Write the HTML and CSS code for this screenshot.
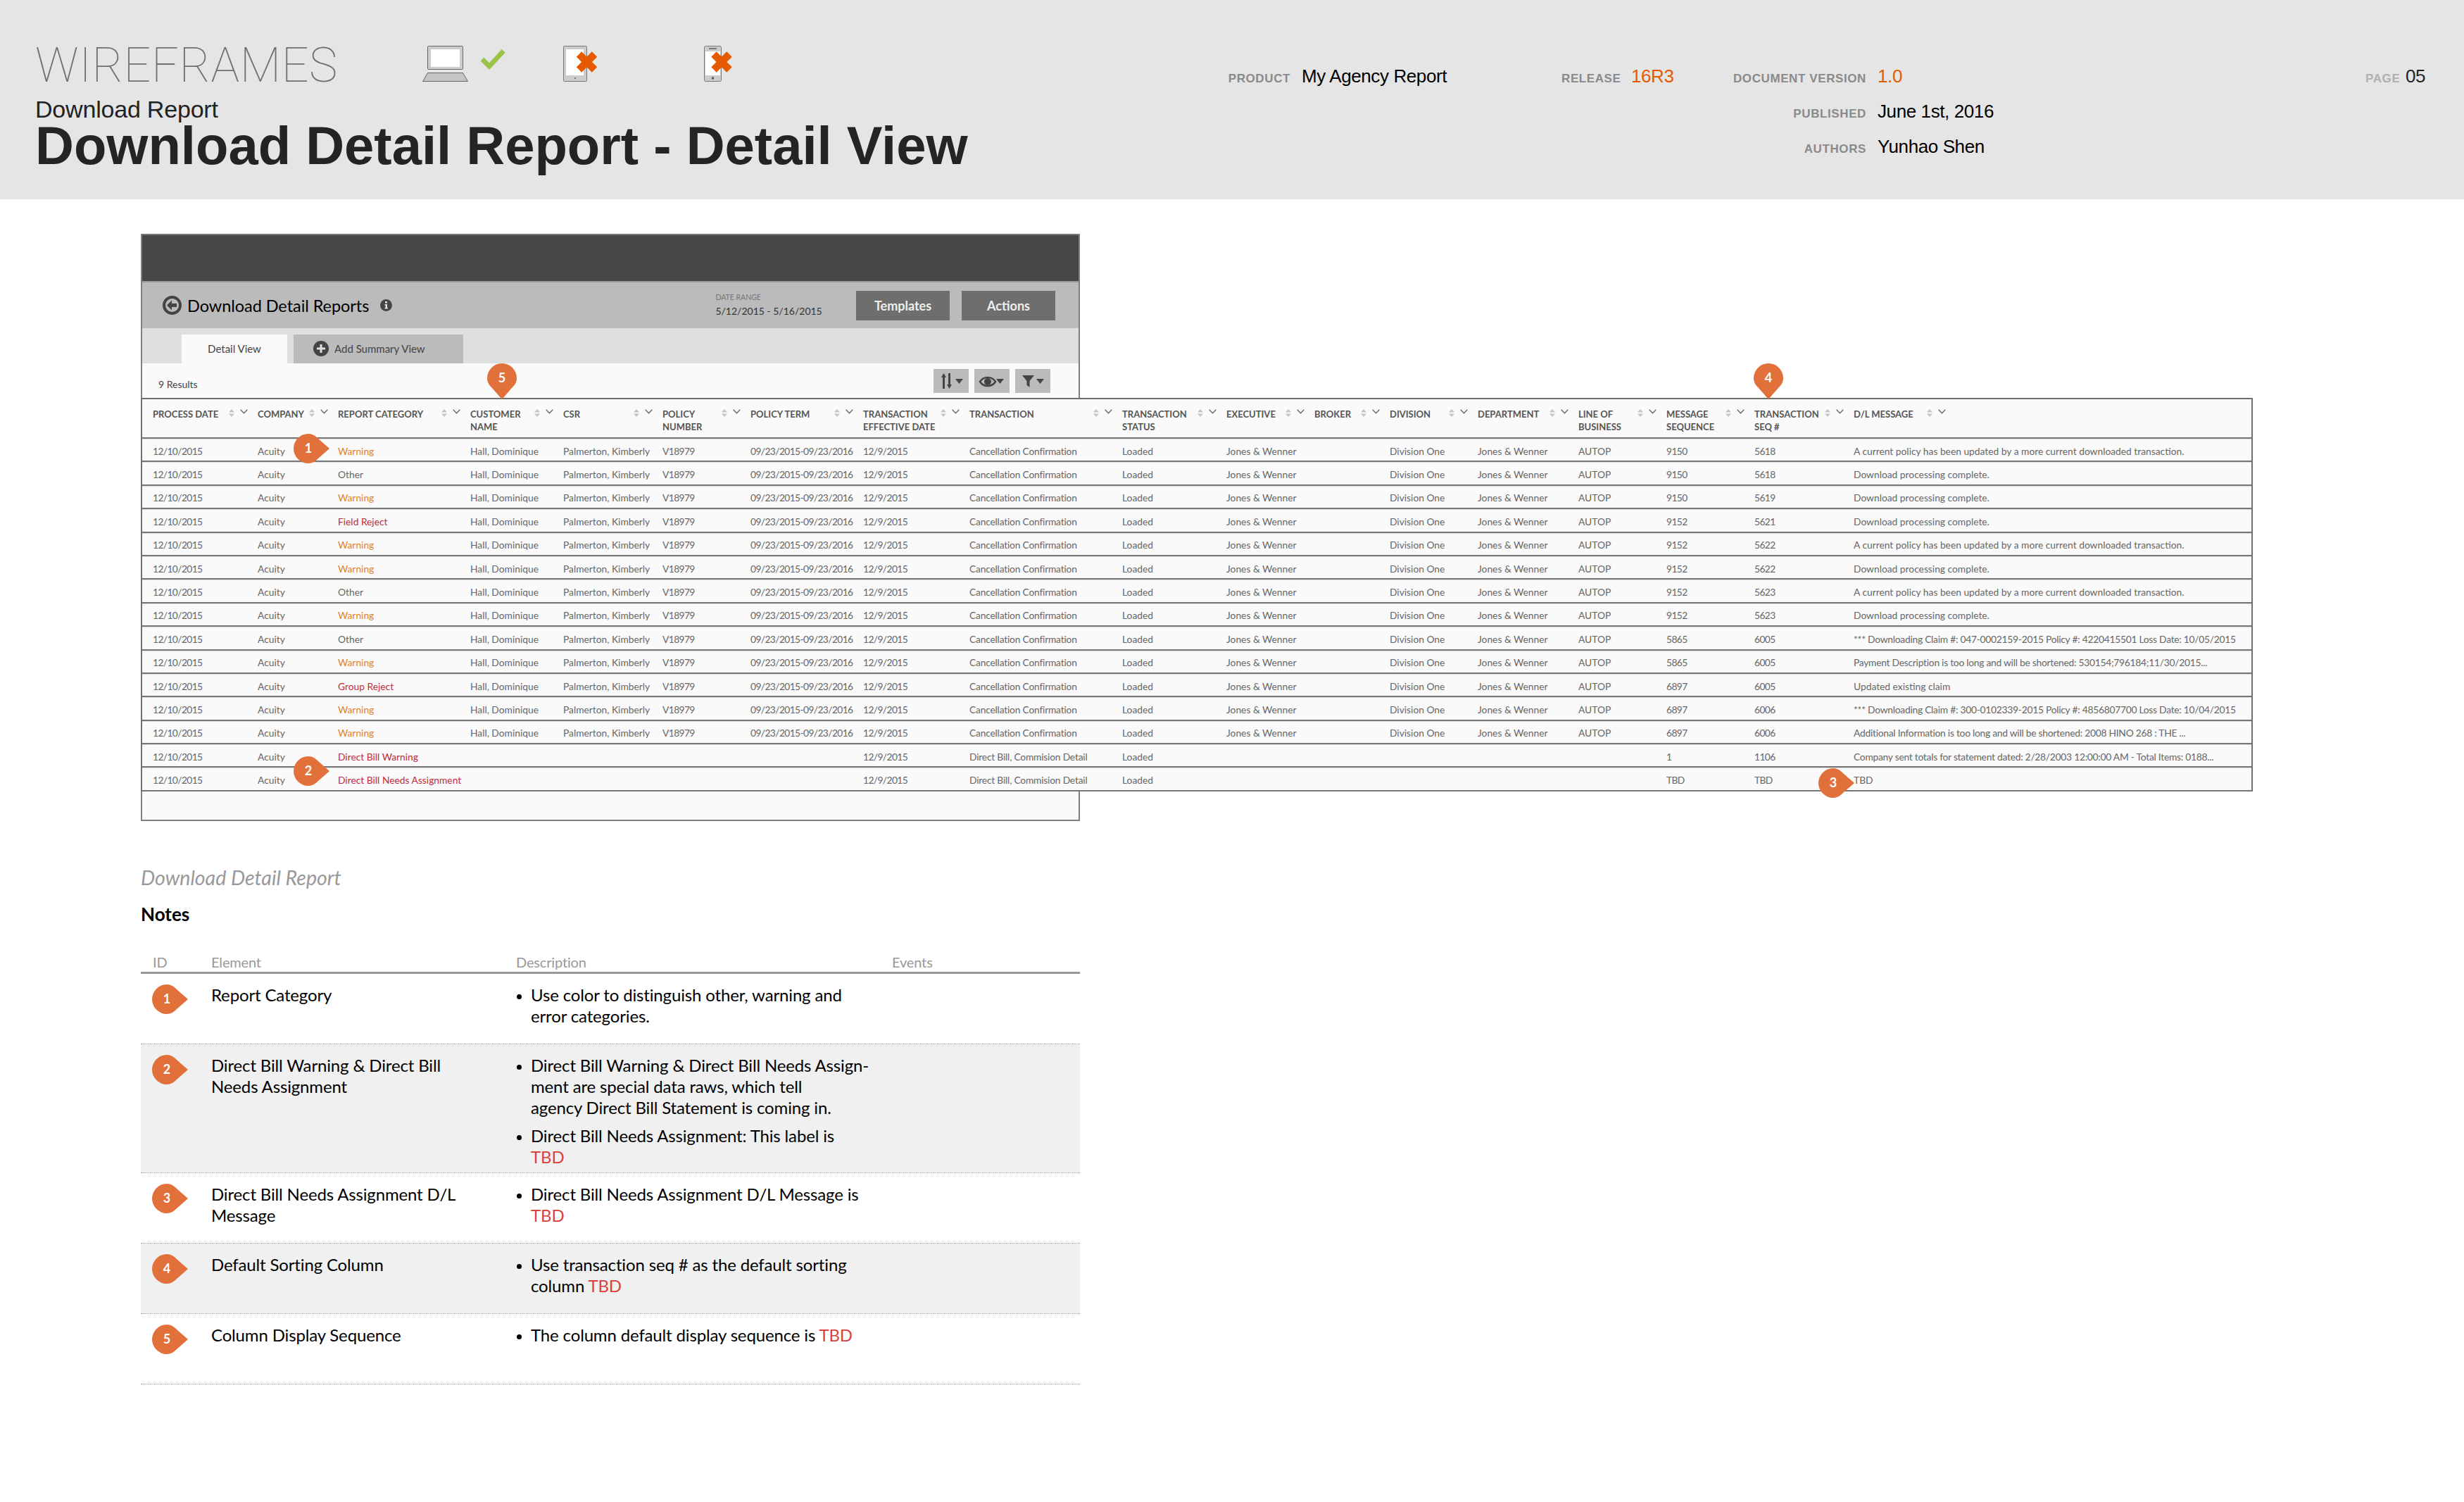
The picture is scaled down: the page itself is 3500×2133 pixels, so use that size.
FILE: index.html
```html
<!DOCTYPE html>
<html lang="en">
<head>
  <meta charset="UTF-8" />
  <title>Download Detail Report - Detail View</title>
  <link rel="stylesheet" href="styles.css">
</head>
<body>
  <header class="page-head">
    <div class="head-left">
      <div class="head-top">
        <div class="wordmark">WIREFRAMES</div>
        <svg class="device" viewBox="0 0 200 52">
          <rect x="7.5" y="0.5" width="50" height="33" rx="1" fill="#ccc" stroke="#666"/>
          <rect x="12" y="5" width="41" height="25" fill="#fff"/>
          <polygon points="0.5,50.5 64.5,50.5 57.5,38.5 7.5,38.5" fill="#c4c4c4" stroke="#666"/>
          <polygon points="82.7,21.7 87.3,16.7 95,24.3 112.7,5 117.7,9.7 95,34" fill="#9bc447"/>
        </svg>
        <svg class="device" viewBox="0 0 200 52">
          <rect x="0.5" y="0.5" width="33" height="50" rx="1" fill="#ccc" stroke="#777"/>
          <rect x="4" y="5" width="25" height="37" fill="#fff"/>
          <circle cx="17" cy="46" r="1" fill="#555"/>
          <path d="M22.5 12 44.5 34M44.5 12 22.5 34" stroke="#e55a00" stroke-width="10.5"/>
        </svg>
        <svg class="device" viewBox="0 0 200 52">
          <rect x="0.5" y="0.5" width="24" height="50" rx="2" fill="#ccc" stroke="#777"/>
          <rect x="2" y="8" width="21" height="34" fill="#fff"/>
          <rect x="7" y="3" width="11" height="2" fill="#777"/>
          <circle cx="12.5" cy="46" r="1.7" fill="#555"/>
          <path d="M14 12 36 34M36 12 14 34" stroke="#e55a00" stroke-width="10.5"/>
        </svg>
      </div>
      <div class="head-sub">Download Report</div>
      <h1 class="head-title">Download Detail Report - Detail View</h1>
    </div>
    <div class="head-meta">
      <span class="meta-label">PRODUCT</span><span class="meta-value">My Agency Report</span>
      <span class="meta-label">RELEASE</span><span class="meta-value hot">16R3</span>
      <span class="meta-label">DOCUMENT VERSION</span><span class="meta-value hot">1.0</span>
      <span class="meta-label page-label">PAGE</span><span class="meta-value page-no">05</span>

      <span class="meta-label meta-col5">PUBLISHED</span><span class="meta-value meta-wide">June 1st, 2016</span>
      <span class="meta-label meta-col5">AUTHORS</span><span class="meta-value meta-wide">Yunhao Shen</span>
    </div>
  </header>

  <main class="page-body">
    <div class="frame">
      <div class="dark-bar"></div>
      <div class="title-bar">
        <svg class="back-icon" viewBox="0 0 27 27">
          <circle cx="13.5" cy="13.5" r="11.5" fill="none" stroke="#444" stroke-width="4"/>
          <path d="M13 6.5 6 13.5l7 7v-4.500h7v-5h-7z" fill="#444"/>
        </svg>
        <span class="report-name">Download Detail Reports</span>
        <svg class="info-icon" viewBox="0 0 17 17">
          <circle cx="8.500" cy="8.500" r="8.500" fill="#444"/>
          <path d="M7 3h3v2.500H7zM6.500 7H10v5h1v1.500H6.500V12h1V8.500h-1z" fill="#ddd"/>
        </svg>
        <div class="date-range">
          <div class="date-label">DATE RANGE</div>
          <div class="date-value">5/12/2015 - 5/16/2015</div>
        </div>
        <button class="bar-btn">Templates</button>
        <button class="bar-btn">Actions</button>
      </div>
      <div class="tabs">
        <div class="tab tab-on">Detail View</div>
        <div class="tab tab-add">
          <svg class="plus-icon" viewBox="0 0 22 22">
            <circle cx="11" cy="11" r="11" fill="#444"/>
            <path d="M9.500 5h3v4.500H17v3h-4.500V17h-3v-4.500H5v-3h4.500z" fill="#ddd"/>
          </svg>
          Add Summary View
        </div>
      </div>
      <div class="results-bar">
        <span class="results-count">9 Results</span>
        <div class="tools">
          <svg class="tool" viewBox="0 0 50 34">
            <path d="M14.500 6 18 12h-2v16h-3V12h-2zM21 6h3v16h2l-3.500 6-3.500-6h2z" fill="#444"/>
            <path d="M31 14h11l-5.500 7z" fill="#444"/>
          </svg>
          <svg class="tool" viewBox="0 0 50 34">
            <path d="M8 18c5-8 17-8 22 0-5 8-17 8-22 0z" fill="none" stroke="#444" stroke-width="2.500"/>
            <circle cx="19" cy="18" r="5" fill="#444"/>
            <path d="M31 14h11l-5.500 7z" fill="#444"/>
          </svg>
          <svg class="tool" viewBox="0 0 50 34">
            <path d="M10 9h17l-6.500 8v9l-4-3v-6z" fill="#444"/>
            <path d="M30 14h11l-5.500 7z" fill="#444"/>
          </svg>
        </div>
      </div>
      <table class="grid">
        <colgroup id="gridCols"></colgroup>
        <thead><tr id="gridHead"></tr></thead>
        <tbody id="gridBody"></tbody>
      </table>

      <svg class="pin pin-at-1" viewBox="0 0 52 42"><use href="#pinRight"/><text x="21" y="27">1</text></svg>
      <svg class="pin pin-at-2" viewBox="0 0 52 42"><use href="#pinRight"/><text x="21" y="27">2</text></svg>
      <svg class="pin pin-at-3" viewBox="0 0 52 42"><use href="#pinRight"/><text x="21" y="27">3</text></svg>
      <svg class="pin-down pin-at-4" viewBox="0 0 42 52"><use href="#pinDown"/><text x="21" y="27">4</text></svg>
      <svg class="pin-down pin-at-5" viewBox="0 0 42 52"><use href="#pinDown"/><text x="21" y="27">5</text></svg>
    </div>

    <section class="notes">
      <div class="notes-source">Download Detail Report</div>
      <h2 class="notes-title">Notes</h2>
      <div class="note-row note-head">
        <div class="note-id-head">ID</div><div>Element</div><div>Description</div><div>Events</div>
      </div>

      <div class="note-row">
        <svg class="pin" viewBox="0 0 52 42"><use href="#pinRight"/><text x="21" y="27">1</text></svg>
        <div>Report Category</div>
        <ul><li>Use color to distinguish other, warning and<br>error categories.</li></ul>
      </div>
      <div class="note-row shaded">
        <svg class="pin" viewBox="0 0 52 42"><use href="#pinRight"/><text x="21" y="27">2</text></svg>
        <div>Direct Bill Warning &amp; Direct Bill<br>Needs Assignment</div>
        <ul>
          <li>Direct Bill Warning &amp; Direct Bill Needs Assign-<br>ment are special data raws, which tell<br>agency Direct Bill Statement is coming in.</li>
          <li>Direct Bill Needs Assignment: This label is<br><span class="tbd">TBD</span></li>
        </ul>
      </div>
      <div class="note-row">
        <svg class="pin" viewBox="0 0 52 42"><use href="#pinRight"/><text x="21" y="27">3</text></svg>
        <div>Direct Bill Needs Assignment D/L<br>Message</div>
        <ul><li>Direct Bill Needs Assignment D/L Message is<br><span class="tbd">TBD</span></li></ul>
      </div>
      <div class="note-row shaded">
        <svg class="pin" viewBox="0 0 52 42"><use href="#pinRight"/><text x="21" y="27">4</text></svg>
        <div>Default Sorting Column</div>
        <ul><li>Use transaction seq # as the default sorting<br>column <span class="tbd">TBD</span></li></ul>
      </div>
      <div class="note-row">
        <svg class="pin" viewBox="0 0 52 42"><use href="#pinRight"/><text x="21" y="27">5</text></svg>
        <div>Column Display Sequence</div>
        <ul><li>The column default display sequence is <span class="tbd">TBD</span></li></ul>
      </div>
    </section>
  </main>

  <svg class="pin-defs">
    <symbol id="pinRight" viewBox="0 0 52 42">
      <path d="M21 0A21 21 0 1 0 21 42C27 42 31 39 35 35L51 21 35 7C31 3 27 0 21 0Z" fill="#e2703a"/>
    </symbol>
    <symbol id="pinDown" viewBox="0 0 42 52">
      <path d="M0 21A21 21 0 1 1 42 21C42 27 39 31 35 35L21 51 7 35C3 31 0 27 0 21Z" fill="#e2703a"/>
    </symbol>
  </svg>

<script>
const COLS = [
  ['PROCESS DATE', 164], ['COMPANY', 114], ['REPORT CATEGORY', 188], ['CUSTOMER<br>NAME', 132],
  ['CSR', 141], ['POLICY<br>NUMBER', 125], ['POLICY TERM', 160], ['TRANSACTION<br>EFFECTIVE DATE', 151],
  ['TRANSACTION', 217], ['TRANSACTION<br>STATUS', 148], ['EXECUTIVE', 125], ['BROKER', 107],
  ['DIVISION', 125], ['DEPARTMENT', 143], ['LINE OF<br>BUSINESS', 125], ['MESSAGE<br>SEQUENCE', 125],
  ['TRANSACTION<br>SEQ #', 141], ['D/L MESSAGE', 565]
];

const CURRENT = 'A current policy has been updated by a more current downloaded transaction.';
const DONE = 'Download processing complete.';

// category, message seq, transaction seq, d/l message
const ROWS = [
  ['Warning', '9150', '5618', CURRENT],
  ['Other', '9150', '5618', DONE],
  ['Warning', '9150', '5619', DONE],
  ['Field Reject', '9152', '5621', DONE],
  ['Warning', '9152', '5622', CURRENT],
  ['Warning', '9152', '5622', DONE],
  ['Other', '9152', '5623', CURRENT],
  ['Warning', '9152', '5623', DONE],
  ['Other', '5865', '6005', '*** Downloading Claim #: 047-0002159-2015 Policy #: 4220415501 Loss Date: 10/05/2015'],
  ['Warning', '5865', '6005', 'Payment Description is too long and will be shortened: 530154;796184;11/30/2015...'],
  ['Group Reject', '6897', '6005', 'Updated existing claim'],
  ['Warning', '6897', '6006', '*** Downloading Claim #: 300-0102339-2015 Policy #: 4856807700 Loss Date: 10/04/2015'],
  ['Warning', '6897', '6006', 'Additional Information is too long and will be shortened: 2008 HINO 268 : THE ...'],
  ['Direct Bill Warning', '1', '1106', 'Company sent totals for statement dated: 2/28/2003 12:00:00 AM - Total Items: 0188...'],
  ['Direct Bill Needs Assignment', 'TBD', 'TBD', 'TBD']
];

const SORT_ICONS = `
  <svg class="sort-icon" viewBox="0 0 8 11"><path d="M4 0 8 4.500H0zM0 6.500h8L4 11z" fill="#c4c4c4"/></svg>
  <svg class="chevron" viewBox="0 0 11 7"><path d="M.7.7 5.500 5.800 10.300.7" fill="none" stroke="#666" stroke-width="1.300"/></svg>`;

function categoryClass(name) {
  if (name === 'Warning') return 'cat-warning';
  if (name === 'Other') return '';
  return 'cat-error';
}

// columns and long messages that are mostly digits run narrower in the reference
function cellClass(row, i) {
  if (i === 2) return categoryClass(row[0]);
  if ([0, 5, 6, 7, 15, 16].includes(i)) return 'digits';
  if (i === 17 && /\d{4}/.test(row[3])) return 'digits-long';
  return '';
}

function renderGrid() {
  document.getElementById('gridCols').innerHTML = COLS.map(c => `<col style="width:${c[1]}px">`).join('');
  document.getElementById('gridHead').innerHTML = COLS.map(c => `
    <th><div class="th-wrap"><span>${c[0]}</span><span class="th-icons">${SORT_ICONS}</span></div></th>`).join('');

  let html = '';
  ROWS.forEach(r => {
    const direct = r[0].startsWith('Direct');
    const cells = direct
      ? ['12/10/2015', 'Acuity', r[0], '', '', '', '', '12/9/2015', 'Direct Bill, Commision Detail', 'Loaded', '', '', '', '', '', r[1], r[2], r[3]]
      : ['12/10/2015', 'Acuity', r[0], 'Hall, Dominique', 'Palmerton, Kimberly', 'V18979', '09/23/2015-09/23/2016', '12/9/2015',
         'Cancellation Confirmation', 'Loaded', 'Jones &amp; Wenner', '', 'Division One', 'Jones &amp; Wenner', 'AUTOP', r[1], r[2], r[3]];
    html += '<tr>' + cells.map((c, i) => `<td class="${cellClass(r, i)}">${c}</td>`).join('') + '</tr>';
  });
  document.getElementById('gridBody').innerHTML = html;
}

renderGrid();
</script>
</body>
</html>
```

FILE: styles.css
```css
* { box-sizing: border-box; }
body { margin: 0; background: #fff; font-family: "Lato", "Liberation Sans", sans-serif; color: #000; min-height: 2133px; overflow: hidden; }

/* page header */
.page-head { height: 283px; background: #e5e5e5; display: flex; align-items: flex-start; font-family: "Liberation Sans", Arial, sans-serif; }
.head-left { flex: 0 0 1744px; padding: 59px 0 0 50px; }
.head-top { display: flex; align-items: flex-start; }
.wordmark { width: 550px; font-family: "Roboto", "Liberation Sans", sans-serif; font-weight: 100; font-size: 68px; line-height: 68px; letter-spacing: 0.6px; color: #6f6f6f; }
.device { width: 200px; height: 52px; margin-top: 6px; }
.head-sub { font-size: 34px; line-height: 34px; margin-top: 11px; letter-spacing: -0.2px; color: #222; }
.head-title { margin: -3px 0 0; font-size: 76px; line-height: 76px; font-weight: 700; color: #242424; letter-spacing: 0; white-space: nowrap; }

.head-meta { margin-top: 93px; display: grid; grid-template-columns: 89px 385px 83px 159px 191px 709px 48px auto; grid-auto-rows: 50px; align-items: baseline; }
.meta-label { font-size: 17px; font-weight: 700; color: #8a8a8a; letter-spacing: 0.6px; white-space: nowrap; text-align: right; }
.meta-value { font-size: 26px; padding-left: 16px; white-space: nowrap; letter-spacing: -0.4px; }
.hot { color: #e55a00; }
.page-label { color: #b0b0b0; }
.page-no { padding-left: 9px; color: #222; }
.meta-col5 { grid-column: 5; }
.meta-wide { grid-column: 6 / 9; }

/* wireframe */
.page-body { padding-left: 200px; }
.frame { position: relative; width: 1334px; height: 834px; margin-top: 49px; background: #fafafa; border: 2px solid #808080; border-top: 0; }
.dark-bar { height: 67px; background: #464646; border-top: 2px solid #777; }
.title-bar { height: 67px; background: #bbb; display: flex; align-items: center; padding: 0 33px 0 29px; border-top: 2px solid #999; }
.back-icon { width: 27px; height: 27px; }
.report-name { margin-left: 8px; font-size: 23.500px; letter-spacing: -0.05px; }
.info-icon { width: 17px; height: 17px; margin-left: 16px; }
.date-range { margin-left: 459px; flex: 1; }
.date-label { font-size: 10.500px; color: #777; line-height: 13px; }
.date-value { font-size: 14px; line-height: 20px; margin-top: 3px; color: #333; }
.bar-btn { width: 133px; height: 42px; margin-left: 17px; border: 0; background: #6e6e6e; color: #eee; font-family: inherit; font-size: 18px; font-weight: 700; }
.tabs { height: 50px; background: #dfdfdf; display: flex; align-items: flex-end; padding-left: 56px; gap: 9px; font-size: 15px; }
.tab { height: 41px; display: flex; align-items: center; justify-content: center; color: #444; padding-bottom: 2px; }
.tab-on { width: 150px; background: #fafafa; }
.tab-add { width: 241px; background: #bbb; justify-content: flex-start; padding-left: 28px; gap: 8px; }
.plus-icon { width: 22px; height: 22px; }
.results-bar { height: 49px; display: flex; align-items: flex-start; padding: 8px 40px 0 23px; position: relative; }
.results-count { font-size: 14px; color: #444; margin-top: 13px; flex: 1; }
.tools { display: flex; gap: 8px; }
.tool { width: 50px; height: 34px; background: #bbb; }

/* results grid, wider than the frame it sits in */
.grid { width: 3000px; margin-left: -2px; table-layout: fixed; border-collapse: separate; border-spacing: 0; background: #fafafa; border: 2px solid #6f6f6f; border-width: 2px 2px 0 2px; font-size: 13.800px; color: #666; }
.grid th { height: 56px; padding: 12px 0 0 0; vertical-align: top; text-align: left; border-bottom: 2px solid #777; font-size: 13px; line-height: 18px; font-weight: 700; color: #555; }
.grid td { height: 33.400px; padding: 3px 0 0; white-space: nowrap; border-bottom: 2px solid #777; box-shadow: inset 0 1px 0 #ddd; }
.grid th:first-child, .grid td:first-child { padding-left: 15px; }
.grid td.digits { letter-spacing: -0.6px; }
.grid td.digits-long { letter-spacing: -0.25px; }
.grid td:nth-child(9) { letter-spacing: -0.2px; }
.th-wrap { display: flex; justify-content: space-between; padding-right: 14px; }
.th-icons { display: flex; gap: 8px; align-items: flex-start; margin-top: 2px; }
.grid th:last-child .th-wrap { justify-content: flex-start; gap: 19px; }
.sort-icon { width: 8px; height: 11px; }
.chevron { width: 11px; height: 7px; }
.cat-warning { color: #e0812f; }
.cat-error { color: #c02a3c; }

/* callout pins */
.pin { width: 52px; height: 42px; flex: none; }
.pin-down { width: 42px; height: 52px; }
.pin text, .pin-down text { font-family: "Lato", sans-serif; font-size: 18px; font-weight: 700; fill: #fff; text-anchor: middle; }
.pin-at-1, .pin-at-2, .pin-at-3, .pin-at-4, .pin-at-5 { position: absolute; }
.pin-at-1 { left: 215px; top: 284px; }
.pin-at-2 { left: 215px; top: 742px; }
.pin-at-3 { left: 2381px; top: 759px; }
.pin-at-4 { left: 2289px; top: 184px; }
.pin-at-5 { left: 490px; top: 184px; }
.pin-defs { width: 0; height: 0; position: absolute; }

/* notes */
.notes { width: 1334px; }
.notes-source { margin-top: 63px; font-size: 28.500px; line-height: 34px; font-style: italic; color: #999; }
.notes-title { margin: 18px 0 0; font-size: 26px; line-height: 34px; font-weight: 700; }
.note-row { display: grid; grid-template-columns: 100px 433px 534px 1fr; min-height: 100px; padding: 15px 0 7px; font-size: 24px; line-height: 30px; letter-spacing: -0.15px; border-bottom: 1px dotted #999; }
.note-row .pin { margin-left: 16px; }
.note-row ul { margin: 0; padding: 0 0 0 21px; }
.note-row li { margin-bottom: 10px; }
.note-row li:last-child { margin-bottom: 0; }
.note-row li::marker { font-size: 20px; }
.note-head { margin-top: 34px; min-height: 0; height: 34px; padding: 0; font-size: 20px; line-height: 35px; color: #999; border-bottom: 3px solid #999; }
.note-id-head { padding-left: 17px; }
.shaded { background: #f0f0f0; }
.tbd { color: #d9423a; }
```
